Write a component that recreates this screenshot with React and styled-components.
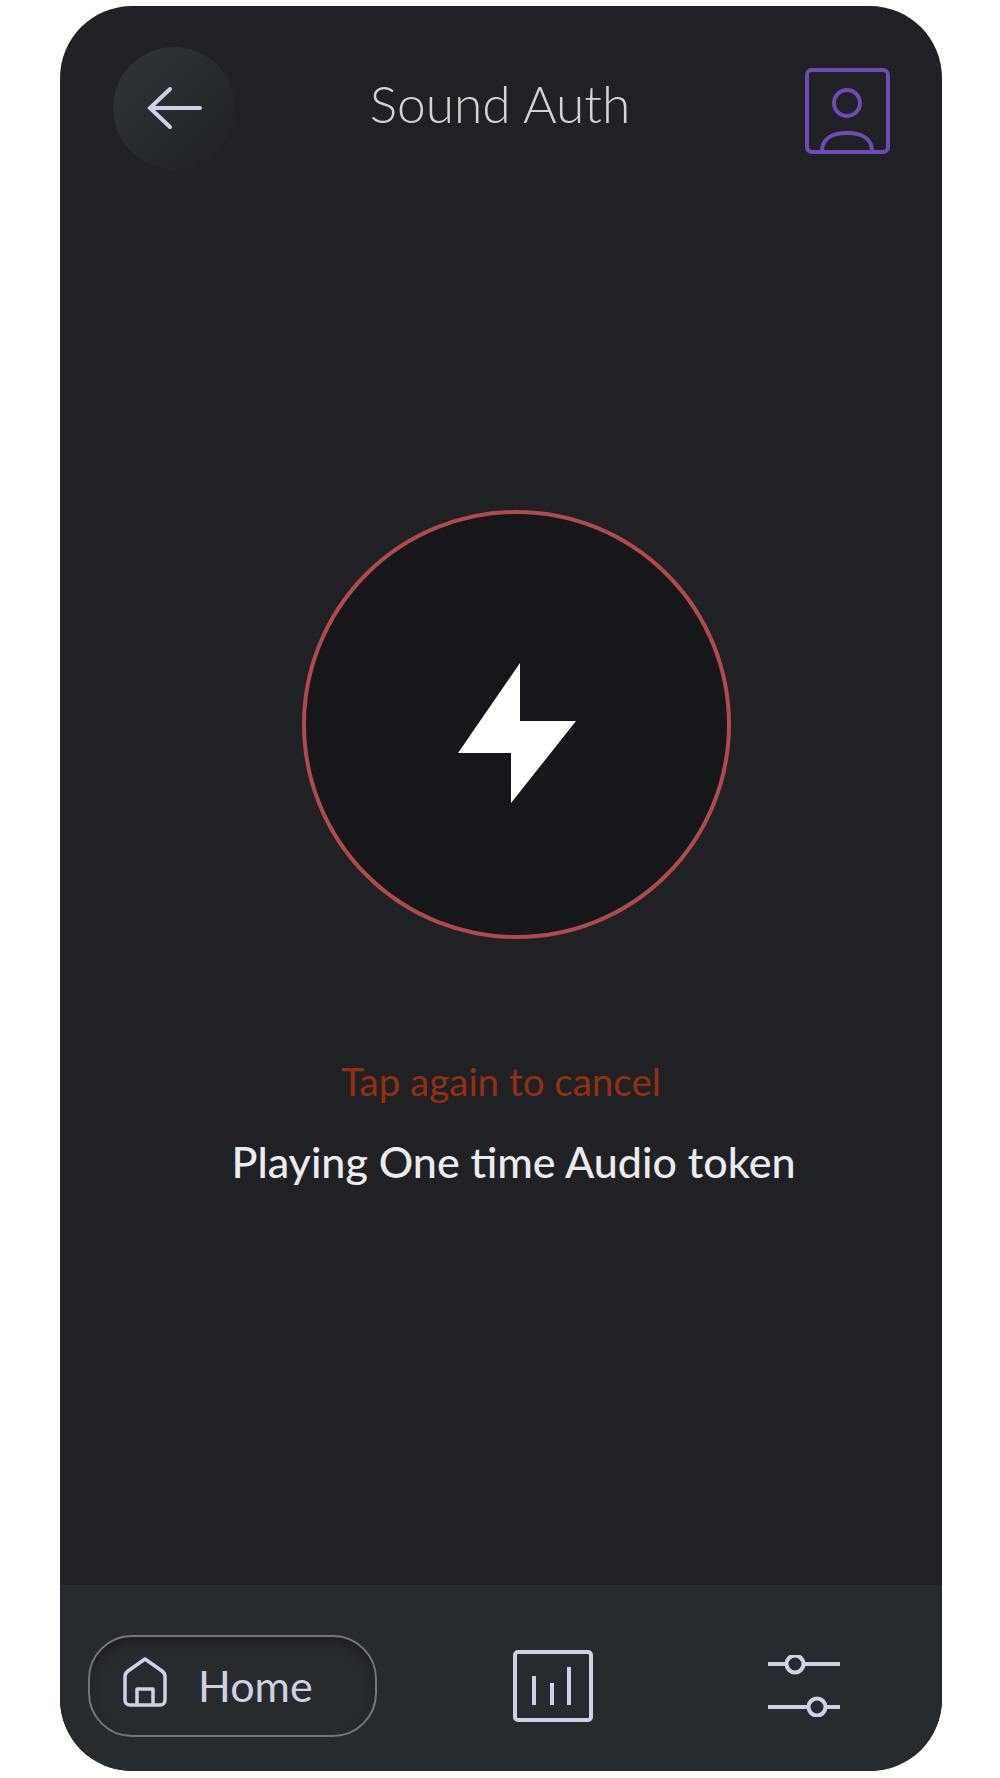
import styled, { createGlobalStyle } from "styled-components";

const GlobalStyle = createGlobalStyle`
  html, body {
    margin: 0;
    padding: 0;
    background: #ffffff;
  }
`;

const Page = styled.div`
  width: 1000px;
  height: 1778px;
  padding: 6px 58px 7px 60px;
  box-sizing: border-box;
  background: #ffffff;
  font-family: Lato, "Open Sans", sans-serif;
`;

const Phone = styled.div`
  display: flex;
  flex-direction: column;
  height: 100%;
  border-radius: 72px;
  overflow: hidden;
  background: #202125;
`;

const Header = styled.header`
  display: flex;
  align-items: center;
  padding: 41px 52px 0 53px;
`;

const BackButton = styled.button`
  display: flex;
  align-items: center;
  justify-content: center;
  width: 122px;
  height: 122px;
  padding: 0;
  border: none;
  border-radius: 50%;
  background: linear-gradient(135deg, #2e3437 10%, #212326 85%);
`;

const Title = styled.h1`
  flex: 1;
  margin: 0 0 10px;
  padding-right: 40px;
  text-align: center;
  font-size: 51.5px;
  font-weight: 300;
  color: #d4d4d6;
`;

const ProfileSlot = styled.div`
  display: flex;
  margin-top: 6px;
`;

const Main = styled.main`
  flex: 1;
  display: flex;
  flex-direction: column;
  align-items: center;
  padding-top: 341px;
`;

const Trigger = styled.button`
  display: flex;
  align-items: center;
  justify-content: center;
  width: 429px;
  height: 429px;
  margin-left: 31px;
  padding: 16px 0 0;
  box-sizing: border-box;
  border: 4px solid #b04a4c;
  border-radius: 50%;
  background: #16171a;
`;

const CancelText = styled.p`
  margin: 119px 0 0;
  font-size: 38.5px;
  line-height: 46px;
  color: #95300f;
`;

const StatusText = styled.p`
  margin: 34px 0 0 25px;
  font-size: 43px;
  line-height: 48px;
  font-weight: 500;
  color: #ececee;
`;

const Nav = styled.nav`
  display: flex;
  align-items: center;
  height: 186px;
  padding: 16px 0 0 28px;
  box-sizing: border-box;
  background: #282b2e;
`;

const HomePill = styled.button`
  display: flex;
  align-items: center;
  gap: 31px;
  width: 289px;
  height: 102px;
  padding: 0 0 0 33px;
  box-sizing: border-box;
  border: 2px solid #73757f;
  border-radius: 44px;
  background: #282b2e;
  box-shadow: inset 0 6px 8px rgba(20, 20, 24, 0.55);
  font-family: inherit;
  font-size: 43px;
  line-height: 48px;
  color: #cfd2e2;

  svg {
    margin-bottom: 8px;
  }
`;

const NavIcon = styled.span`
  display: flex;
  margin-left: ${(props) => props.$offset}px;
`;

function ArrowIcon() {
  return (
    <svg width="56" height="44" viewBox="0 0 56 44" fill="none">
      <path
        d="M54 22H5M24 3L4 22l20 19"
        stroke="#cfd2e6"
        strokeWidth="4"
        strokeLinecap="round"
      />
    </svg>
  );
}

function ProfileIcon() {
  return (
    <svg width="85" height="86" viewBox="0 0 85 86" fill="none" stroke="#6f4bb8" strokeWidth="4">
      <rect x="2" y="2" width="81" height="82" rx="5" />
      <circle cx="42" cy="35" r="13" />
      <path d="M17 83C17 70 28 65 42 65s25 5 25 18" />
    </svg>
  );
}

function BoltIcon() {
  return (
    <svg width="118" height="140" viewBox="0 0 118 140">
      <path d="M62 0v58h56L53 140V90H0z" fill="#ffffff" />
    </svg>
  );
}

function HomeIcon() {
  return (
    <svg width="44" height="50" viewBox="0 0 44 50" fill="none" stroke="#cfd2e6" strokeWidth="3.500" strokeLinejoin="round">
      <path d="M22 2L5 14c-2 1.500-3 3-3 5.500V43c0 3 2 5 5 5h30c3 0 5-2 5-5V19.500c0-2.500-1-4-3-5.500z" />
      <path d="M14 48V32h16v16" />
    </svg>
  );
}

function ChartIcon() {
  return (
    <svg width="80" height="72" viewBox="0 0 80 72" fill="none" stroke="#cfd2e6">
      <rect x="2" y="2" width="76" height="68" rx="3" strokeWidth="4" />
      <path d="M21 26v29M39 33v22M56 17v38" strokeWidth="4" />
    </svg>
  );
}

function SlidersIcon() {
  return (
    <svg width="74" height="62" viewBox="0 0 74 62" fill="none" stroke="#cfd2e6" strokeWidth="4">
      <path d="M1 9h18M37 9h36M1 52h40M59 52h14" />
      <circle cx="28" cy="9" r="8.500" />
      <circle cx="50" cy="52" r="8.500" />
    </svg>
  );
}

export default function App() {
  return (
    <Page>
      <GlobalStyle />
      <Phone>
        <Header>
          <BackButton>
            <ArrowIcon />
          </BackButton>
          <Title>Sound Auth</Title>
          <ProfileSlot>
            <ProfileIcon />
          </ProfileSlot>
        </Header>
        <Main>
          <Trigger>
            <BoltIcon />
          </Trigger>
          <CancelText>Tap again to cancel</CancelText>
          <StatusText>Playing One time Audio token</StatusText>
        </Main>
        <Nav>
          <HomePill>
            <HomeIcon />
            Home
          </HomePill>
          <NavIcon $offset={136}>
            <ChartIcon />
          </NavIcon>
          <NavIcon $offset={174}>
            <SlidersIcon />
          </NavIcon>
        </Nav>
      </Phone>
    </Page>
  );
}
